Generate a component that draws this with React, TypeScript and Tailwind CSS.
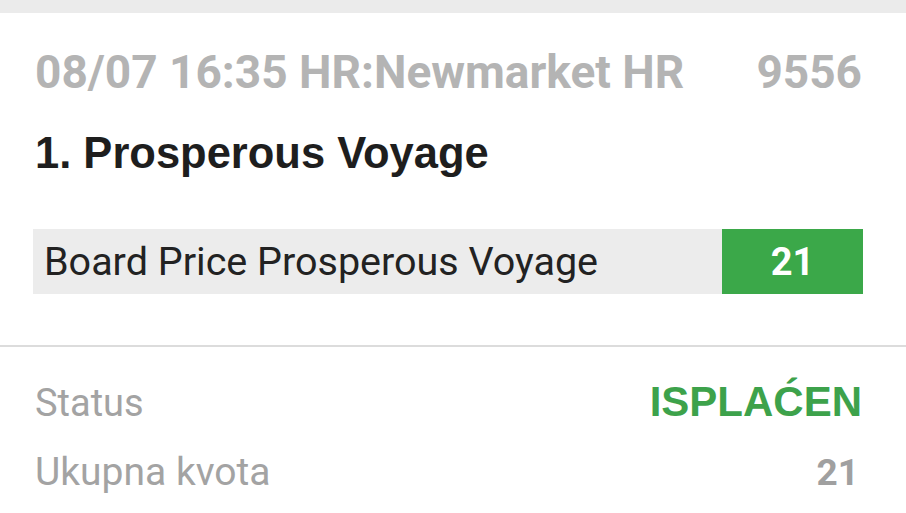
import React from "react";

export default function App() {
  return (
    <div className="w-[906px] h-[513px] overflow-hidden bg-[#ebebeb] pt-[13px]" style={{ fontFamily: "Roboto, 'Noto Sans', sans-serif" }}>
      <div className="bg-white h-full">
        <div className="pl-[35px] pr-[44px] pt-[36px]">
          <div className="flex justify-between items-baseline text-[46px] leading-[46px] font-bold text-[#b4b4b4]">
            <span>08/07 16:35 HR:Newmarket HR</span>
            <span>9556</span>
          </div>
          <div className="mt-[36px] text-[43.5px] leading-[44px] font-bold text-[#1e1e1e]" style={{ fontFamily: "'Liberation Sans', Arial, sans-serif" }}>
            1. Prosperous Voyage
          </div>
        </div>
        <div className="pl-[33px] pr-[43px] mt-[54px]">
          <div className="flex h-[65px] bg-[#ececec]">
            <div className="flex-1 flex items-center pl-[11px] text-[39.5px] leading-[39px] text-[#222]">Board Price Prosperous Voyage</div>
            <div className="w-[141px] bg-[#3ba849] flex items-center justify-center text-[38px] leading-[38px] font-bold text-white">21</div>
          </div>
        </div>
        <div className="h-[2px] bg-[#dcdcdc] mt-[51px]" />
        <div className="pl-[35px] pr-[44px] pt-[36px]">
          <div className="flex justify-between items-baseline h-[38px] leading-[38px]">
            <span className="text-[38px] text-[#a3a3a3]">Status</span>
            <span className="text-[42px] font-bold text-[#3da24b]" style={{ fontFamily: "'Liberation Sans', Arial, sans-serif" }}>ISPLAĆEN</span>
          </div>
          <div className="flex justify-between items-baseline h-[38px] leading-[38px] mt-[32px]">
            <span className="text-[39px] text-[#a3a3a3]">Ukupna kvota</span>
            <span className="text-[37px] font-bold text-[#a0a0a0] pr-[3px]">21</span>
          </div>
        </div>
      </div>
    </div>
  );
}
